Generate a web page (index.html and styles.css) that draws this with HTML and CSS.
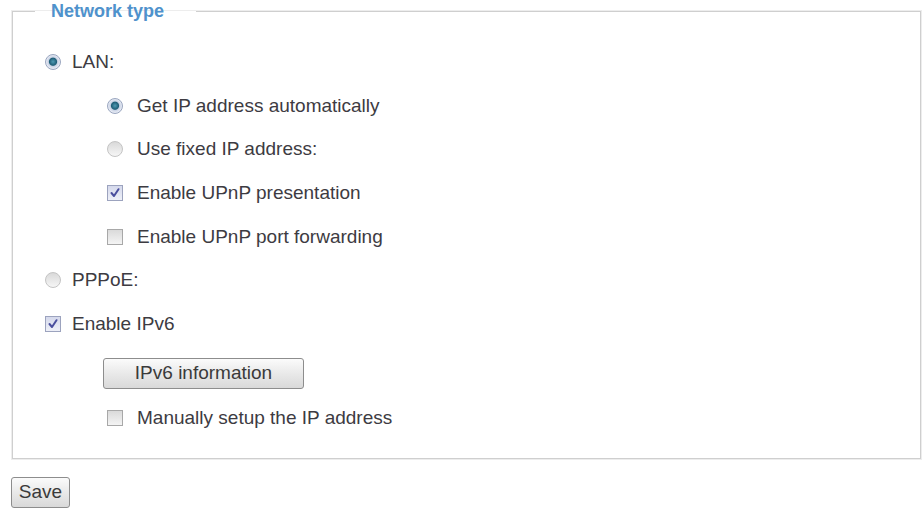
FILE: index.html
```html
<!DOCTYPE html>
<html>
<head>
<meta charset="utf-8">
<link rel="stylesheet" href="styles.css">
</head>
<body>
<fieldset class="box">
  <legend class="title">Network type</legend>
  <div class="row lvl1"><span class="radio on"></span><span class="lbl">LAN:</span></div>
  <div class="row lvl2"><span class="radio on"></span><span class="lbl">Get IP address automatically</span></div>
  <div class="row lvl2"><span class="radio"></span><span class="lbl">Use fixed IP address:</span></div>
  <div class="row lvl2"><span class="check on"><svg viewBox="0 0 16 16" width="16" height="16"><path d="M4.5 8 L7 11 L11.5 4.2" fill="none" stroke="#4a4f9e" stroke-width="2" stroke-linecap="round" stroke-linejoin="round"/></svg></span><span class="lbl">Enable UPnP presentation</span></div>
  <div class="row lvl2"><span class="check"></span><span class="lbl">Enable UPnP port forwarding</span></div>
  <div class="row lvl1"><span class="radio"></span><span class="lbl">PPPoE:</span></div>
  <div class="row lvl1"><span class="check on"><svg viewBox="0 0 16 16" width="16" height="16"><path d="M4.5 8 L7 11 L11.5 4.2" fill="none" stroke="#4a4f9e" stroke-width="2" stroke-linecap="round" stroke-linejoin="round"/></svg></span><span class="lbl">Enable IPv6</span></div>
  <div class="btnrow"><button class="btn wide">IPv6 information</button></div>
  <div class="row lvl2"><span class="check"></span><span class="lbl">Manually setup the IP address</span></div>
</fieldset>
<div class="actions"><button class="btn save">Save</button></div>
</body>
</html>
```

FILE: styles.css
```css
html, body {
  margin: 0;
  padding: 0;
  background: #ffffff;
}
body {
  font-family: "Liberation Sans", Arial, sans-serif;
  font-size: 19px;
  color: #3d3b42;
  padding-left: 12px;
}
.box {
  margin: 0;
  width: 907px;
  padding: 18px 0 18px 0;
  border: 1px solid #cfcfcf;
  box-shadow: 0 0 0 1px #ededed;
}
.title {
  margin-left: 22px;
  padding: 0 32px 0 16px;
  font-size: 18px;
  line-height: 22px;
  font-weight: bold;
  color: #4f92cc;
}
.row {
  display: flex;
  align-items: center;
  height: 43.7px;
}
.lvl1 { padding-left: 32px; }
.lvl2 { padding-left: 94px; }
.lvl1 .lbl { margin-left: 11px; }
.lvl2 .lbl { margin-left: 14px; }
.lbl { line-height: 22px; }
.radio {
  box-sizing: border-box;
  width: 16px;
  height: 16px;
  border-radius: 50%;
  border: 1px solid #c4c4c4;
  background: linear-gradient(#d9d9d9, #f6f6f6);
}
.radio.on {
  border-color: #9aa6bf;
  background: radial-gradient(circle at 50% 48%, #4f9ab3 0, #1f5f78 3.6px, #c9d2e4 4.6px, #e9edf6 7px);
}
.check {
  box-sizing: border-box;
  width: 16px;
  height: 16px;
  border: 1px solid #a8a8a8;
  background: linear-gradient(#dadada, #f4f4f4);
  display: flex;
}
.check.on {
  border-color: #9ca3be;
  background: linear-gradient(#d5d9ec, #eef0f8);
}
.check svg {
  margin: -1px;
}
.btnrow {
  padding-left: 90px;
  margin-top: 12px;
  margin-bottom: 7px;
}
.btn {
  box-sizing: border-box;
  height: 31px;
  font-family: "Liberation Sans", Arial, sans-serif;
  font-size: 19px;
  color: #3a3a3a;
  border: 1px solid #8d8d8d;
  border-radius: 3px;
  background: linear-gradient(#fbfbfb, #e9e9e9 50%, #d9d9d9);
  padding: 0;
}
.wide { width: 201px; }
.actions {
  margin-top: 18px;
}
.save {
  width: 59px;
  margin-left: -1px;
}
```
